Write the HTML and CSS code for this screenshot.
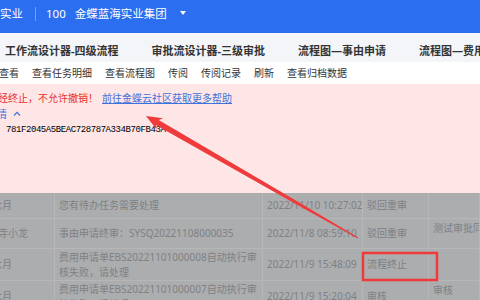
FILE: index.html
```html
<!DOCTYPE html>
<html lang="zh-CN">
<head>
<meta charset="utf-8">
<title>流程</title>
<link rel="stylesheet" href="styles.css">
</head>
<body>
<div class="page">
  <header class="topbar">
    <span class="org-tail">实业</span>
    <span class="sep"></span>
    <span class="code">100</span>
    <span class="org">金蝶蓝海实业集团</span>
    <span class="caret"></span>
  </header>
  <nav class="tabs">
    <span class="tab">工作流设计器-四级流程</span>
    <span class="tab">审批流设计器-三级审批</span>
    <span class="tab">流程图—事由申请</span>
    <span class="tab">流程图—费用申请</span>
  </nav>
  <div class="toolbar">
    <span class="tool first">查看</span>
    <span class="tool">查看任务明细</span>
    <span class="tool">查看流程图</span>
    <span class="tool">传阅</span>
    <span class="tool">传阅记录</span>
    <span class="tool">刷新</span>
    <span class="tool">查看归档数据</span>
  </div>
  <section class="error">
    <div class="err-line"><span class="err-msg">经终止，不允许撤销！</span><a class="err-link" href="#">前往金蝶云社区获取更多帮助</a></div>
    <div class="err-line"><span class="detail">详情</span><svg class="chev" width="8" height="5" viewBox="0 0 8 5"><path d="M1 4.5 L4 1.3 L7 4.5" fill="none" stroke="#3d74db" stroke-width="1.2"/></svg></div>
    <div class="err-hash">781F2045A5BEAC728787A334B70FB43A</div>
  </section>
  <div class="grid">
    <div class="c c1"><span class="cut8">七月</span></div>
    <div class="c">您有待办任务需要处理</div>
    <div class="c">2022/11/10 10:27:02</div>
    <div class="c">驳回重审</div>
    <div class="c"></div>

    <div class="c c1"><span class="cut2">寺小龙</span></div>
    <div class="c">事由申请终审：SYSQ20221108000035</div>
    <div class="c">2022/11/8 08:59:10</div>
    <div class="c">驳回重审</div>
    <div class="c top">测试审批同意</div>

    <div class="c c1"><span class="cut8">七月</span></div>
    <div class="c top two">费用申请单EBS20221101000008自动执行审<br>核失败，请处理</div>
    <div class="c">2022/11/9 15:48:09</div>
    <div class="c">流程终止</div>
    <div class="c"></div>

    <div class="c c1"><span class="cut8">七月</span></div>
    <div class="c top two">费用申请单EBS20221101000007自动执行审<br>核失败，请处理</div>
    <div class="c">2022/11/9 15:20:04</div>
    <div class="c">审核</div>
    <div class="c top">审核</div>
  </div>
  <svg class="annot" width="480" height="300" viewBox="0 0 480 300">
    <polygon fill="#ef3b3b" points="146,116 163.1,118.35 158.67,120.05 294.14,199.41 358.3,237.48 357.7,238.52 292.54,202.19 155.87,124.91 156.63,129.61"/>
    <rect x="363" y="253" width="74" height="27" fill="none" stroke="#f03a3a" stroke-width="2.5"/>
  </svg>
</div>
</body>
</html>
```
FILE: styles.css
```css
html, body {
  margin: 0;
  padding: 0;
}
body {
  font-family: "Noto Sans", "Noto Sans CJK SC", sans-serif;
  background: #ffffff;
}
.page {
  position: relative;
  width: 480px;
  height: 300px;
  overflow: hidden;
}
.topbar {
  height: 33px;
  box-sizing: border-box;
  background: #2b6ef0;
  color: #ffffff;
  display: flex;
  align-items: flex-start;
  padding-top: 6px;
  font-size: 11.5px;
  line-height: 16px;
  white-space: nowrap;
}
.sep {
  width: 1px;
  height: 14px;
  margin: 1px 10px 0 12px;
  background: rgba(255, 255, 255, 0.35);
}
.code {
  margin-right: 9px;
}
.caret {
  width: 0;
  height: 0;
  border-left: 3.5px solid transparent;
  border-right: 3.5px solid transparent;
  border-top: 4px solid #ffffff;
  margin: 5px 0 0 13px;
}
.tabs {
  height: 29px;
  box-sizing: border-box;
  background: #f4f5f8;
  display: flex;
  align-items: flex-start;
  gap: 33px;
  padding: 10px 0 0 5px;
  font-size: 11px;
  line-height: 16px;
  font-weight: 700;
  color: #333333;
  white-space: nowrap;
}
.toolbar {
  height: 22px;
  background: #ffffff;
  display: flex;
  align-items: center;
  gap: 13px;
  font-size: 10px;
  line-height: 14px;
  color: #333333;
  white-space: nowrap;
}
.tool.first {
  margin-left: -1px;
}
.error {
  height: 109px;
  box-sizing: border-box;
  background: #fee6e6;
  padding-top: 6px;
  font-size: 10px;
  line-height: 16px;
  white-space: nowrap;
}
.err-line {
  display: flex;
  align-items: center;
  height: 16px;
}
.err-msg {
  color: #e8302f;
  margin-left: -2px;
}
.err-link {
  color: #3d74db;
  text-decoration: underline;
  margin-left: 4px;
}
.detail {
  color: #3d74db;
  margin-left: -13px;
}
.chev {
  margin-left: 6px;
  margin-top: -2px;
}
.err-hash {
  font-family: "Liberation Mono", monospace;
  font-size: 9px;
  letter-spacing: -0.42px;
  line-height: 16px;
  color: #000000;
  padding-left: 6px;
}
.grid {
  display: grid;
  grid-template-columns: 55px 208px 100px 66px 1fr;
  grid-template-rows: 26px 30px 32px 32px;
  background: #abadaf;
  color: #7f8184;
  font-size: 10px;
  line-height: 15px;
  white-space: nowrap;
}
.c {
  box-sizing: border-box;
  border-right: 1px solid #b5b7b9;
  border-bottom: 1px solid #b5b7b9;
  padding-left: 4px;
  display: flex;
  align-items: center;
  overflow: hidden;
}
.c.top {
  align-items: flex-start;
  padding-top: 2px;
}
.c.two {
  display: block;
  padding-top: 1px;
}
.c1 {
  padding-left: 0;
}
.cut8 {
  margin-left: -8px;
}
.cut2 {
  margin-left: -2px;
}
.annot {
  position: absolute;
  left: 0;
  top: 0;
  pointer-events: none;
}
```
